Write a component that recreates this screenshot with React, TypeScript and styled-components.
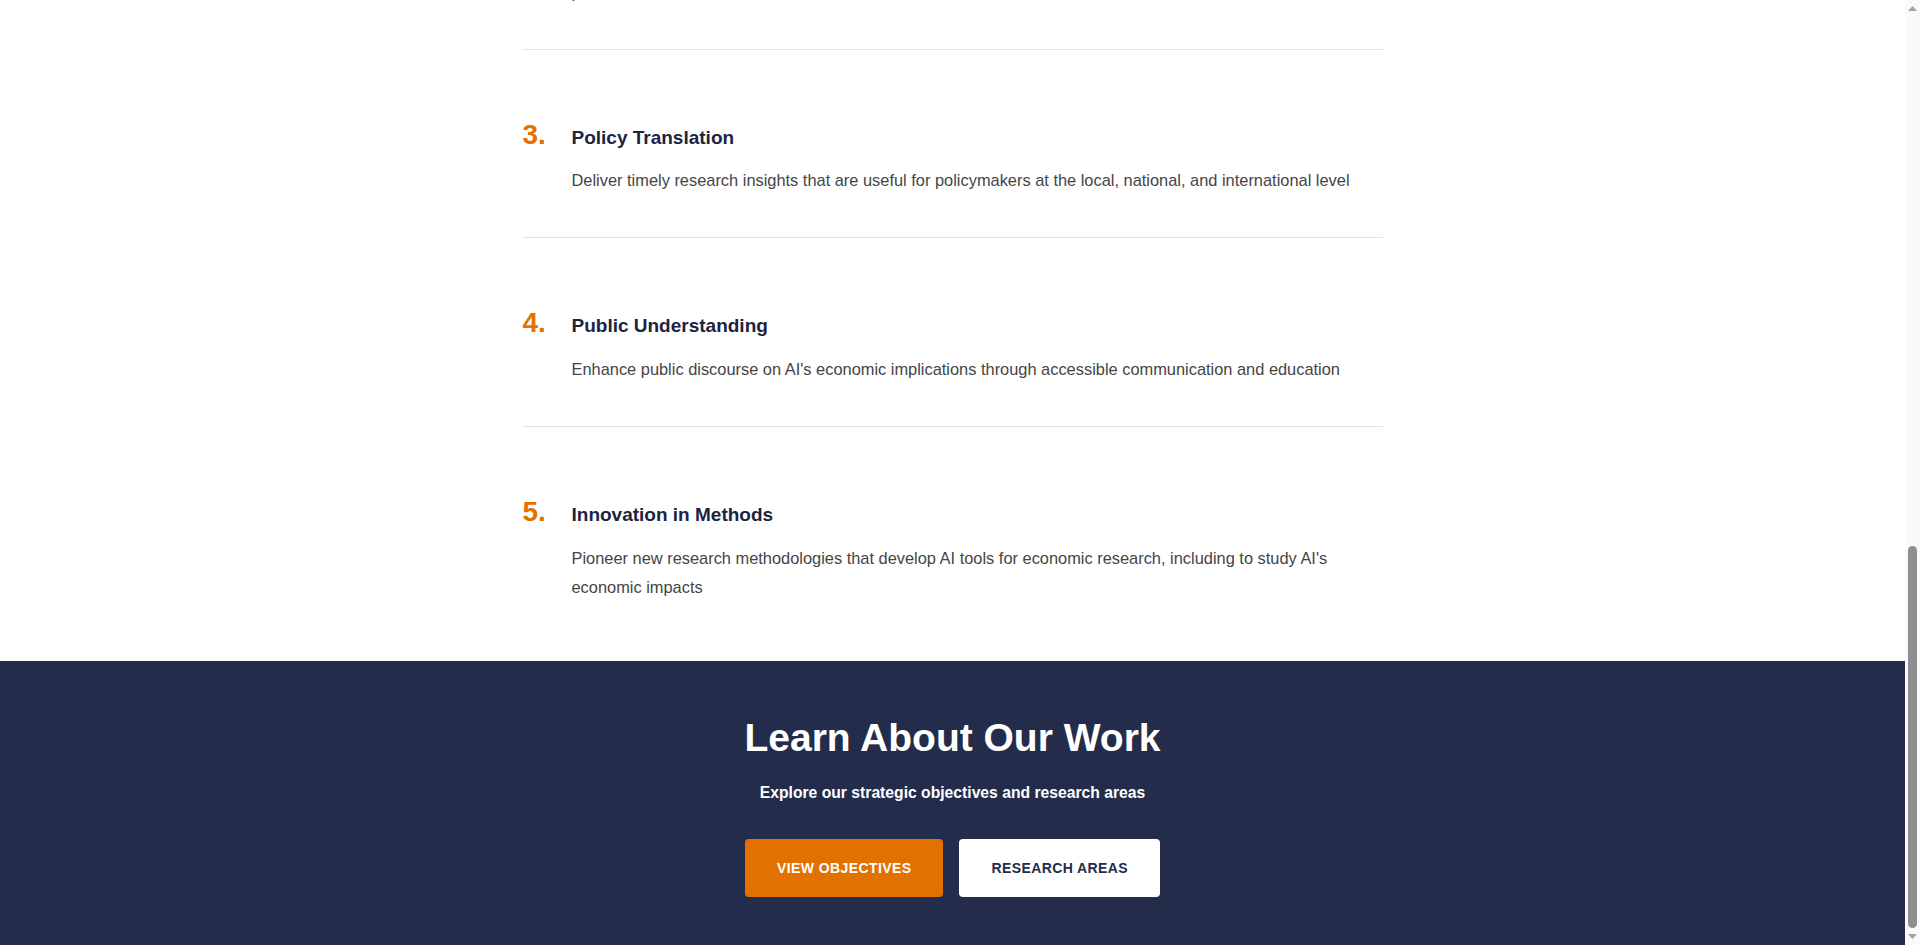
import React, { useLayoutEffect, useEffect } from "react";
import styled, { createGlobalStyle } from "styled-components";

const GlobalStyle = createGlobalStyle`
  * { box-sizing: border-box; }
  html, body { margin: 0; padding: 0; }
  body {
    font-family: "Liberation Sans", Arial, sans-serif;
    background: #ffffff;
    color: #333;
    padding-right: 15px;
  }
`;

const NAVY = "#242c4b";
const ORANGE = "#e37100";

/* Browser scrollbar, drawn over the right edge as in the screenshot */
const ScrollBar = styled.div`
  position: fixed;
  top: 0;
  right: 0;
  width: 15px;
  height: 100vh;
  background: #fafafa;
  display: flex;
  flex-direction: column;
  z-index: 10;
`;

const ScrollArrow = styled.div`
  flex: 0 0 17px;
  display: flex;
  align-items: center;
  justify-content: center;
`;

const ScrollTrack = styled.div`
  flex: 1;
  display: flex;
  flex-direction: column;
  justify-content: flex-end;
  padding: 0 3px;
`;

const ScrollThumb = styled.div`
  height: 382px;
  background: #8f8f8f;
  border-radius: 5px;
`;

const TopBar = styled.header`
  height: 80px;
  background: ${NAVY};
  display: flex;
  align-items: center;
  justify-content: space-between;
  padding: 0 48px;
`;

const Brand = styled.div`
  color: #fff;
  font-size: 22px;
  font-weight: 700;
`;

const NavLinks = styled.nav`
  display: flex;
  gap: 32px;
  color: #fff;
  font-size: 15px;
`;

const Hero = styled.section`
  background: #f4f5f8;
  padding: 270px 0;
  text-align: center;
`;

const HeroTitle = styled.h1`
  margin: 0 0 24px;
  font-size: 52px;
  line-height: 1.2;
  color: ${NAVY};
`;

const HeroText = styled.p`
  margin: 0 auto;
  max-width: 720px;
  font-size: 19px;
  line-height: 1.6;
  color: #444;
`;

const ObjectivesSection = styled.section`
  padding: 96px 0 17px;
`;

const Container = styled.div`
  max-width: 860px;
  margin: 0 auto;
`;

const SectionTitle = styled.h2`
  margin: 0 0 8px;
  font-size: 36px;
  line-height: 1.25;
  color: ${NAVY};
`;

const ObjectiveItem = styled.div<{ $last?: boolean }>`
  display: flex;
  align-items: baseline;
  gap: 16px;
  padding: 68px 0 42px;
  border-bottom: ${(p) => (p.$last ? "none" : "1px solid #e2e2e2")};
`;

const ItemNumber = styled.span`
  flex: 0 0 33px;
  font-size: 28px;
  line-height: 34px;
  font-weight: 700;
  color: ${ORANGE};
`;

const ItemBody = styled.div`
  flex: 1;
  min-width: 0;
`;

const ItemTitle = styled.h3`
  margin: 0;
  font-size: 19px;
  line-height: 1.3;
  font-weight: 700;
  color: #1c2442;
`;

const ItemText = styled.p`
  margin: 16px 0 0;
  font-size: 16.4px;
  line-height: 29px;
  color: #454545;
`;

const CtaSection = styled.section`
  background: ${NAVY};
  padding: 52px 24px 48px;
  text-align: center;
`;

const CtaTitle = styled.h2`
  margin: 0 0 18px;
  font-size: 39px;
  line-height: 50px;
  font-weight: 700;
  color: #ffffff;
`;

const CtaText = styled.p`
  margin: 0;
  font-size: 15.7px;
  line-height: 24px;
  font-weight: 700;
  color: #ffffff;
`;

const ButtonRow = styled.div`
  display: flex;
  justify-content: center;
  gap: 16px;
  margin-top: 34px;
`;

const CtaButton = styled.a<{ $variant: "primary" | "light" }>`
  display: inline-block;
  padding: 20px 32px;
  font-size: 14px;
  line-height: 18px;
  font-weight: 700;
  letter-spacing: 0.4px;
  text-transform: uppercase;
  text-decoration: none;
  border-radius: 4px;
  background: ${(p) => (p.$variant === "primary" ? ORANGE : "#ffffff")};
  color: ${(p) => (p.$variant === "primary" ? "#ffffff" : NAVY)};
`;

const objectives = [
  {
    title: "Research Excellence",
    text: "Produce rigorous, high-impact research on how artificial intelligence is transforming productivity, labor markets, and economic growth",
  },
  {
    title: "Interdisciplinary Collaboration",
    text: "Bring together economists, computer scientists, and industry partners to generate evidence that informs sound policies",
  },
  {
    title: "Policy Translation",
    text: "Deliver timely research insights that are useful for policymakers at the local, national, and international level",
  },
  {
    title: "Public Understanding",
    text: "Enhance public discourse on AI's economic implications through accessible communication and education",
  },
  {
    title: "Innovation in Methods",
    text: "Pioneer new research methodologies that develop AI tools for economic research, including to study AI's economic impacts",
  },
];

function FakeScrollbar() {
  return (
    <ScrollBar aria-hidden="true">
      <ScrollArrow>
        <svg width="15" height="17" viewBox="0 0 15 17">
          <polygon points="3,11 7.5,6 12,11" fill="#a3a3a3" />
        </svg>
      </ScrollArrow>
      <ScrollTrack>
        <ScrollThumb />
      </ScrollTrack>
      <ScrollArrow>
        <svg width="15" height="17" viewBox="0 0 15 17">
          <polygon points="3,6 7.5,11 12,6" fill="#a3a3a3" />
        </svg>
      </ScrollArrow>
    </ScrollBar>
  );
}

export default function App() {
  useLayoutEffect(() => {
    window.scrollTo(0, document.documentElement.scrollHeight);
  }, []);
  useEffect(() => {
    const id = window.setTimeout(() => {
      window.scrollTo(0, document.documentElement.scrollHeight);
    }, 0);
    return () => window.clearTimeout(id);
  }, []);

  return (
    <>
      <GlobalStyle />
      <FakeScrollbar />
      <TopBar>
        <Brand>AI Economics Lab</Brand>
        <NavLinks>
          <span>About</span>
          <span>Research</span>
          <span>People</span>
          <span>News</span>
        </NavLinks>
      </TopBar>
      <Hero>
        <HeroTitle>Our Mission</HeroTitle>
        <HeroText>
          We study the economic consequences of artificial intelligence and help
          society prepare for the changes ahead.
        </HeroText>
      </Hero>
      <ObjectivesSection>
        <Container>
          <SectionTitle>Strategic Objectives</SectionTitle>
          {objectives.map((o, i) => (
            <ObjectiveItem key={o.title} $last={i === objectives.length - 1}>
              <ItemNumber>{i + 1}.</ItemNumber>
              <ItemBody>
                <ItemTitle>{o.title}</ItemTitle>
                <ItemText>{o.text}</ItemText>
              </ItemBody>
            </ObjectiveItem>
          ))}
        </Container>
      </ObjectivesSection>
      <CtaSection>
        <CtaTitle>Learn About Our Work</CtaTitle>
        <CtaText>Explore our strategic objectives and research areas</CtaText>
        <ButtonRow>
          <CtaButton href="#objectives" $variant="primary">
            View Objectives
          </CtaButton>
          <CtaButton href="#research" $variant="light">
            Research Areas
          </CtaButton>
        </ButtonRow>
      </CtaSection>
    </>
  );
}
